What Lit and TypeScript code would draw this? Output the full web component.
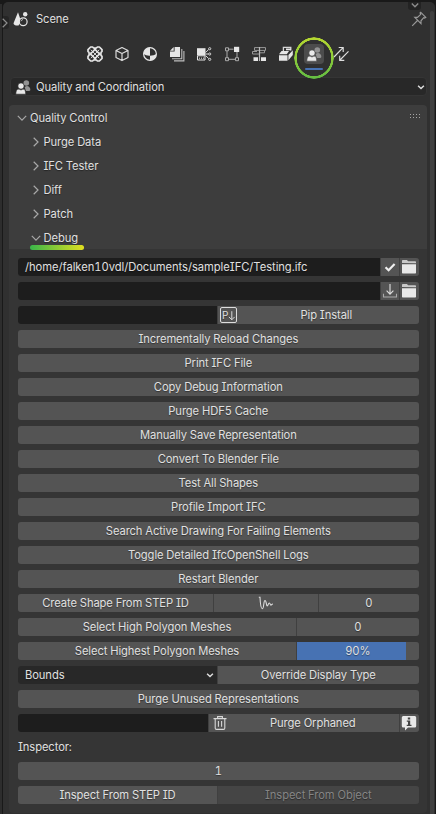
import { LitElement, html, svg, css } from "lit";
import { customElement, property } from "lit/decorators.js";

const icons: Record<string, unknown> = {
  scene: svg`<path d="M5 1.3 8.2 10.6Q6 12.5 5.6 14.5Q.8 14.8.5 12.2Z" fill="#e6e6e6"/><circle cx="12.2" cy="3.2" r="2.2" fill="#e6e6e6"/><circle cx="10.2" cy="10.8" r="3.9" fill="#303030" stroke="#e6e6e6" stroke-width="1.2"/><path d="M7.9 10.3Q8.4 8.6 10 8.5" stroke="#bbb" fill="none"/>`,
  knot: svg`<g fill="none" stroke="#e6e6e6" stroke-linejoin="round"><path stroke-width="1.7" d="M1 5.4V3.6L3.6 1H5.6L15 10.4V12.4L12.4 15H10.4L1 5.4ZM15 5.4V3.6L12.4 1H10.4L1 10.4V12.4L3.6 15H5.6Z"/><path d="M3.8 3.8 12.2 12.2M12.2 3.8 3.8 12.2" stroke-width=".9"/><path d="M8 1 10 3M8 1 6 3M8 15 10 13M8 15 6 13M1 8 2.8 6.2M1 8 2.8 9.8M15 8 13.2 6.2M15 8 13.2 9.8" stroke-width="1" stroke="#bbb"/></g>`,
  cube: svg`<path d="M8 1.5 14 4.4V11.6L8 14.6 2 11.6V4.4ZM2 4.4 8 7.4 14 4.4M8 7.4V14.6" fill="none" stroke="#dedede" stroke-width="1.15" stroke-linejoin="round"/>`,
  material: svg`<circle cx="8" cy="8" r="6.4" fill="none" stroke="#e6e6e6" stroke-width="1.2"/><path d="M8 8V1.6A6.4 6.4 0 0 0 1.6 8Q4 10 8 9.8V14.4A6.4 6.4 0 0 0 14.4 8Q12 9.4 8 9.8Z" fill="#e6e6e6"/>`,
  layers: svg`<path d="M5.6 1H11V11H1V5.6H5.6Z" fill="#e6e6e6"/><path d="M1 4.7 4.7 1V4.7Z" fill="#e6e6e6"/><path d="M3 12.8H12.8V3M5 14.9H14.9V5" fill="none" stroke="#bdbdbd" stroke-width="1.1"/>`,
  server: svg`<path d="M1 2.2H9.5V9.4H1Z" fill="#e6e6e6"/><path d="M1.5 9.8H9V14H1.5Z" fill="none" stroke="#e6e6e6"/><path d="M3 12.2H4M5 12.2H6M7 12.2H8" stroke="#e6e6e6"/><path d="M9.5 6.5 12.7 3.5M9.5 8H12.5M9.5 9.5 12.7 12.6" stroke="#d8d8d8"/><g fill="none" stroke="#dedede" stroke-width=".9"><circle cx="13.7" cy="2.7" r="1.1"/><circle cx="13.7" cy="8" r="1.1"/><circle cx="13.7" cy="13.4" r="1.1"/></g>`,
  verts: svg`<path d="M3 5V11.5M5 13.3H11M13 6V11.5M5 3.2H9.5" stroke="#aaa"/><path d="M1.5 1.8H4.5V4.8H1.5ZM1.5 11.7H4.5V14.7H1.5ZM11.5 11.7H14.5V14.7H11.5Z" fill="none" stroke="#aaa"/><path d="M10 .8H15.2V6H10Z" fill="#e6e6e6"/>`,
  tree: svg`<path d="M8.5 1V15" stroke="#bbb" stroke-width="1.2"/><path d="M8 1.6H3.5V4.4H8M9 1.6H14.5V4.4H9M6 5.5H1.5V8H8M9 6.8H13.5V4.4" fill="none" stroke="#999"/><path d="M2.5 11.3H7V15H2.5ZM10 11.3H15V15H10Z" fill="#e6e6e6"/>`,
  boxes: svg`<path d="M5.4 5V1.4H12.8V4.5" fill="none" stroke="#d5d5d5" stroke-width="1.3"/><path d="M1 8.3 3.5 5H11L8.8 8.3ZM1 9.2H9.5V14.8H1ZM10.4 8.9 14.8 4.3V9L10.4 14.2ZM8 2.5H13V4.2H8Z" fill="#e6e6e6"/>`,
  people: svg`<g fill="#929292"><circle cx="11.3" cy="4" r="2.8"/><path d="M9.6 8Q13 5.8 15 9Q16 12 14 12H11Z"/></g><g fill="#e9e9e9" stroke="var(--cut,#2a2a2a)" stroke-width=".6"><circle cx="6" cy="7" r="3.1"/><path d="M.8 15.2Q.8 10.2 4 10.1L6 11 8 10.1Q10.7 10.2 10.7 15.2Z"/></g>`,
  swap: svg`<path d="M1 11 9.8 1.8M5.7 1.5H10.2V6M15.5 5.3 7 14M6.7 9.8V14.4H11.3" fill="none" stroke="#dedede" stroke-width="1.15"/>`,
  pin: svg`<path d="M9.8 1.3 14.8 6.3 13.6 7.1 12.7 6.7 10 9.8V12.6L3.8 6.4H6.4L9.7 3.4 9.1 2ZM6.5 9.5 1.2 14.8" fill="none" stroke="#999" stroke-width="1.15"/>`,
  check: svg`<path d="M3.5 8.2 6.6 11.2 12.6 5" fill="none" stroke="#eee" stroke-width="2.2"/>`,
  folder: svg`<path d="M1 4V1.8Q1 1 1.8 1H6L7 2.2H14.2Q15 2.2 15 3V4.2Z" fill="#c8c8c8"/><path d="M1 5.2H15V13.8Q15 14.5 14.3 14.5H1.7Q1 14.5 1 13.8Z" fill="#e8e8e8"/>`,
  download: svg`<path d="M8 1V11M4.6 7.7 8 11.1 11.4 7.7" fill="none" stroke="#ddd" stroke-width="1.15"/><path d="M1.5 10.8V14H14.5V10.8" fill="none" stroke="#aaa" stroke-width="1.1"/>`,
  wave: svg`<path d="M.8 2.3H2Q2.5 13.7 4.3 13.8C6 13.8 5.5 5.5 7 5.5S8.2 11 9.2 11 10.2 8 11.3 8 12 10.3 13 10.1 14 8.8 15 9" fill="none" stroke="#ddd" stroke-width="1.1"/>`,
  trash: svg`<path d="M1.5 3.6H14.5M5.6 3.4V1.6H10.4V3.4M3.2 3.8V13Q3.2 14.4 4.5 14.4H11.5Q12.8 14.4 12.8 13V3.8M6.4 6V11.7M9.6 6V11.7" fill="none" stroke="#d8d8d8" stroke-width="1.1"/>`,
  info: svg`<path d="M2.3 1H13.7Q15.2 1 15.2 2.5V11Q15.2 12.5 13.7 12.5H7L4 15.5V12.5H2.3Q.8 12.5.8 11V2.5Q.8 1 2.3 1Z" fill="#e8e8e8"/><path d="M6.8 2.5H9.2V4.5H6.8ZM5.8 5.5H9.2V9.8H10.5V11H5.7V9.8H7V6.7H5.8Z" fill="#444"/>`,
  down: svg`<path d="M3.8 5.8 8 10.1 12.2 5.8" fill="none" stroke="#a8a8a8" stroke-width="1.2"/>`,
  right: svg`<path d="M5.7 3.8 10 8 5.7 12.2" fill="none" stroke="#a8a8a8" stroke-width="1.2"/>`,
  small: svg`<path d="M4.8 6.5 8 9.7 11.2 6.5" fill="none" stroke="#8c8c8c" stroke-width="1.4"/>`,
  caret: svg`<path d="M5.1 6.7 8 9.5 10.9 6.7" fill="none" stroke="#ddd" stroke-width="1.5"/>`,
};

@customElement("ui-icon")
class UiIcon extends LitElement {
  @property() name = "";
  static styles = css`
    :host { display: block; width: 16px; height: 16px; flex: none; }
    svg { display: block; width: 100%; height: 100%; overflow: visible; }
  `;
  render() {
    return html`<svg viewBox="0 0 16 16">${icons[this.name]}</svg>`;
  }
}

const actions = [
  "Incrementally Reload Changes",
  "Print IFC File",
  "Copy Debug Information",
  "Purge HDF5 Cache",
  "Manually Save Representation",
  "Convert To Blender File",
  "Test All Shapes",
  "Profile Import IFC",
  "Search Active Drawing For Failing Elements",
  "Toggle Detailed IfcOpenShell Logs",
  "Restart Blender",
];
const tabs = ["knot", "cube", "material", "layers", "server", "verts", "tree", "boxes", "people", "swap"];

@customElement("app-root")
class AppRoot extends LitElement {
  static styles = css`
    :host {
      display: block; width: 436px; height: 814px; overflow: hidden; background: #191919;
      font: 11.2px/18px Inter, sans-serif; color: #e0e0e0; letter-spacing: -0.09px;
      font-feature-settings: "cv08", "tnum"; text-shadow: 0 1px 1px #0006; white-space: nowrap;
    }
    * { box-sizing: border-box; }
    .window { height: 814px; padding: 2px 1px 0 3px; position: relative; }
    .edge { position: absolute; left: 0; top: 4px; width: 1.5px; bottom: 0; background: #2d2d2d; }
    .area { height: 812px; background: #303030; border-radius: 5px 5px 0 0; padding: 7px 8px 0 6px; position: relative; }
    .expand { position: absolute; left: 0; top: 14px; width: 6px; height: 13px; background: #252525; border-radius: 0 3px 3px 0; }
    .expand ui-icon { margin: -1px 0 0 -6px; opacity: .8; }
    .fold { position: absolute; right: 14px; top: 0; width: 13px; height: 8px; background: #232323; border-radius: 0 0 3px 3px; }
    .fold ui-icon { margin: -5px -1.5px; }
    .scroll { position: absolute; right: 1px; top: 9px; width: 4px; bottom: 0; border-radius: 2px 2px 0 0; background: #404040; }
    .title { display: flex; align-items: center; height: 20px; gap: 7px; padding: 0 0 0 4px; }
    .title .pin { margin-left: auto; margin-right: 0; }
    .tabs { display: flex; gap: 7.3px; margin: 15px 0 0 76.2px; }
    .tab { width: 20px; height: 20px; display: grid; place-items: center; position: relative; }
    .tab.on { background: #4c4c4c; border-radius: 4px; --cut: #4c4c4c; }
    .ring { position: absolute; left: -9.5px; top: -7.5px; width: 40px; height: 42px; border-radius: 50%; background: linear-gradient(#b7d830, #62bd43); -webkit-mask: radial-gradient(closest-side, #0000 calc(100% - 3px), #000 calc(100% - 2.5px) calc(100% - .5px), #0000); }
    .under { position: absolute; left: 1px; top: 24px; width: 18px; height: 2px; background: #4772b3; border-radius: 1px; }
    .select { display: flex; align-items: center; height: 19px; margin: 13px 0 0 1px; padding: 0 0 0 4px; gap: 5px; background: #282828; border: 1px solid #353535; border-radius: 4px; width: 417px; }
    .select .c { margin-left: auto; margin-right: -3px; }
    .panel { margin-top: 9px; width: 418px; height: 708px; background: #353535; border-radius: 4px; overflow: hidden; }
    .heads { background: #3d3d3d; height: 144px; padding-top: 1px; }
    .head, .sub { display: flex; align-items: center; height: 24px; }
    .head { padding-left: 5px; }
    .sub { padding-left: 18.5px; }
    .grip { margin: -4px 7px 0 auto; width: 10px; height: 5px; background: repeating-linear-gradient(90deg, #a5a5a5 0 1px, #0000 1px 3px); -webkit-mask: linear-gradient(#000 0 1px, #0000 1px 3px, #000 3px 4px, #0000 4px); }
    .mark { height: 5px; width: 54px; margin: -4px 0 0 20.5px; border-radius: 3px; background: linear-gradient(90deg, #39b54a, #e0df20); position: relative; }
    .body { padding: 8px 8.4px 0 9px; display: flex; flex-direction: column; gap: 6px; }
    .row { display: flex; height: 18px; gap: 1px; border-radius: 3px; overflow: hidden; text-align: center; background: #404040; }
    .b { background: #545454; flex: 1; min-width: 0; }
    .f { background: #1d1d1d; text-align: left; padding-left: 7px; flex: none; }
    .i { display: grid; place-items: center; background: #545454; flex: none; width: 18.5px; }
    .i ui-icon { margin-left: -.5px; }
    .w200 { flex: none; width: 199px; }
    .w362 { width: 361.6px; letter-spacing: -0.04px; }
    .w190 { width: 190px; }
    .w195 { flex: none; width: 195px; }
    .w104 { flex: none; width: 104px; }
    .w278 { flex: none; width: 278px; }
    .bar { background: linear-gradient(90deg, #4772b3 109px, #545454 109px); }
    .menu { background: #282828; display: flex; align-items: center; padding-left: 7px; }
    .menu ui-icon { margin-left: auto; margin-right: -1px; }
    .pip { display: flex; align-items: center; padding-left: 2px; }
    .pbox { width: 17px; height: 16px; border: 1px solid #ddd; border-radius: 2px; font-size: 10px; line-height: 15px; letter-spacing: 0; display: flex; flex: none; padding-left: 1px; }
    .pbox svg { width: 8px; height: 14px; }
    .grow { flex: 1; }
    .pip .grow { padding-right: 3px; }
    .joined .grow { padding-right: 1.5px; }
    .label { height: 18px; text-align: left; }
    .off { background: #454545; color: #858585; }
    .joined { display: flex; align-items: center; }
    .joined ui-icon { margin-left: 3px; }
  `;
  render() {
    const icon = (n: string, c = "") => html`<ui-icon class=${c} name=${n}></ui-icon>`;
    return html`<div class="window"><div class="edge"></div><div class="area">
      <div class="expand">${icon("right")}</div>
      <div class="fold">${icon("small")}</div>
      <div class="scroll"></div>
      <div class="title">${icon("scene")}<span>Scene</span>${icon("pin", "pin")}</div>
      <div class="tabs">${tabs.map((t) => html`<div class="tab ${t === "people" ? "on" : ""}">${icon(t)}${t === "people" ? html`<div class="under"></div><div class="ring"></div>` : ""}</div>`)}</div>
      <div class="select">${icon("people")}<span>Quality and Coordination</span>${icon("caret", "c")}</div>
      <div class="panel">
        <div class="heads">
          <div class="head">${icon("down")}<span>Quality Control</span><div class="grip"></div></div>
          ${["Purge Data", "IFC Tester", "Diff", "Patch"].map((t) => html`<div class="sub">${icon("right")}<span>${t}</span></div>`)}
          <div class="sub">${icon("down")}<span>Debug</span></div>
        </div>
        <div class="mark"></div>
        <div class="body">
          <div class="row"><div class="f w362">/home/falken10vdl/Documents/sampleIFC/Testing.ifc</div><div class="i">${icon("check")}</div><div class="i">${icon("folder")}</div></div>
          <div class="row"><div class="f w362"></div><div class="i">${icon("download")}</div><div class="i">${icon("folder")}</div></div>
          <div class="row"><div class="f w200"></div><div class="b pip"><span class="pbox">P<svg viewBox="0 0 8 14"><path d="M4 3V12M1 9 4 12 7 9" fill="none" stroke="#ddd"/></svg></span><span class="grow">Pip Install</span></div></div>
          ${actions.map((a) => html`<div class="row"><div class="b">${a}</div></div>`)}
          <div class="row"><div class="b w195">Create Shape From STEP ID</div><div class="i w104">${icon("wave")}</div><div class="b">0</div></div>
          <div class="row"><div class="b w278">Select High Polygon Meshes</div><div class="b">0</div></div>
          <div class="row"><div class="b w278">Select Highest Polygon Meshes</div><div class="b bar">90%</div></div>
          <div class="row"><div class="menu w200">Bounds${icon("caret")}</div><div class="b">Override Display Type</div></div>
          <div class="row"><div class="b">Purge Unused Representations</div></div>
          <div class="row"><div class="f w190"></div><div class="b joined">${icon("trash")}<span class="grow">Purge Orphaned</span></div><div class="i">${icon("info")}</div></div>
          <div class="label">Inspector:</div>
          <div class="row"><div class="b">1</div></div>
          <div class="row"><div class="b w200">Inspect From STEP ID</div><div class="b off">Inspect From Object</div></div>
        </div>
      </div>
    </div></div>`;
  }
}
